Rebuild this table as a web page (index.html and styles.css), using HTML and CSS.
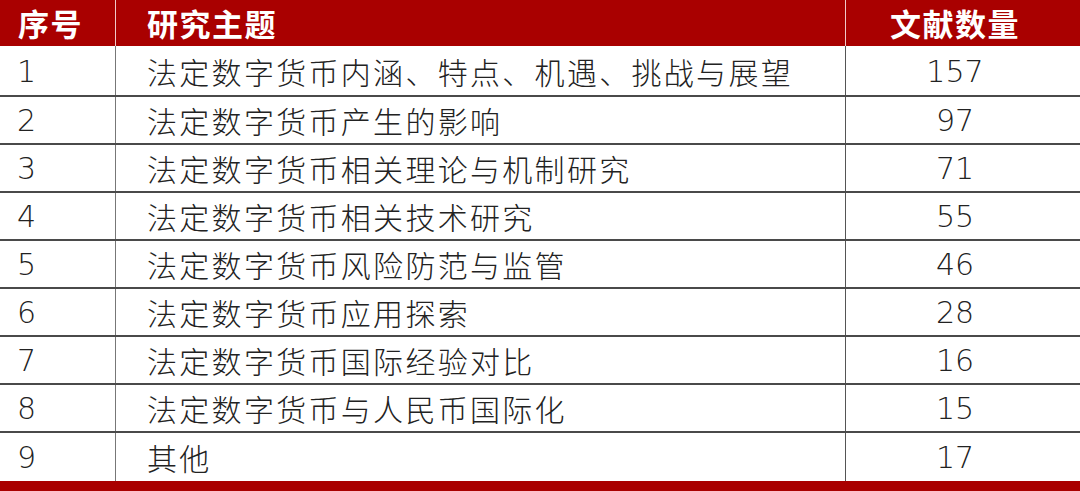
FILE: index.html
```html
<!DOCTYPE html>
<html lang="zh">
<head>
<meta charset="utf-8">
<link rel="stylesheet" href="styles.css">
</head>
<body>
<div class="table">
  <div class="row head">
    <div class="cell c1">序号</div>
    <div class="cell c2">研究主题</div>
    <div class="cell c3">文献数量</div>
  </div>
  <div class="row first">
    <div class="cell c1 num">1</div>
    <div class="cell c2">法定数字货币内涵、特点、机遇、挑战与展望</div>
    <div class="cell c3 num">157</div>
  </div>
  <div class="row">
    <div class="cell c1 num">2</div>
    <div class="cell c2">法定数字货币产生的影响</div>
    <div class="cell c3 num">97</div>
  </div>
  <div class="row">
    <div class="cell c1 num">3</div>
    <div class="cell c2">法定数字货币相关理论与机制研究</div>
    <div class="cell c3 num">71</div>
  </div>
  <div class="row">
    <div class="cell c1 num">4</div>
    <div class="cell c2">法定数字货币相关技术研究</div>
    <div class="cell c3 num">55</div>
  </div>
  <div class="row">
    <div class="cell c1 num">5</div>
    <div class="cell c2">法定数字货币风险防范与监管</div>
    <div class="cell c3 num">46</div>
  </div>
  <div class="row">
    <div class="cell c1 num">6</div>
    <div class="cell c2">法定数字货币应用探索</div>
    <div class="cell c3 num">28</div>
  </div>
  <div class="row">
    <div class="cell c1 num">7</div>
    <div class="cell c2">法定数字货币国际经验对比</div>
    <div class="cell c3 num">16</div>
  </div>
  <div class="row">
    <div class="cell c1 num">8</div>
    <div class="cell c2">法定数字货币与人民币国际化</div>
    <div class="cell c3 num">15</div>
  </div>
  <div class="row last">
    <div class="cell c1 num">9</div>
    <div class="cell c2">其他</div>
    <div class="cell c3 num">17</div>
  </div>
  <div class="footbar"></div>
</div>
</body>
</html>
```
FILE: styles.css
```css
html, body {
  margin: 0;
  padding: 0;
  background: #ffffff;
}
.table {
  width: 1080px;
  font-family: "Noto Sans CJK SC", "Noto Sans", sans-serif;
  color: #222222;
}
.row {
  display: grid;
  grid-template-columns: 116px 730px 234px;
  height: 48px;
  box-sizing: border-box;
  border-bottom: 2px solid #4a4a4a;
}
.row.first {
  height: 51px;
}
.row.last {
  border-bottom: none;
}
.cell {
  display: flex;
  align-items: center;
  font-size: 30px;
  font-weight: 300;
  line-height: 1;
  letter-spacing: 2.3px;
  white-space: nowrap;
}
.c1 {
  padding-left: 18px;
  border-right: 1px solid #777777;
}
.c2 {
  padding-left: 31px;
  border-right: 1px solid #555555;
}
.c3 {
  justify-content: center;
  padding-right: 16px;
}
.num {
  font-family: "DejaVu Sans", "Roboto", sans-serif;
  font-stretch: condensed;
  font-weight: 200;
  font-size: 30px;
  letter-spacing: 0;
  padding-top: 2px;
}
.c1.num {
  padding-left: 17px;
}
.row.head {
  height: 46px;
  background: #a90000;
  border-bottom: none;
  color: #ffffff;
}
.row.head .cell {
  font-weight: 700;
  font-size: 31px;
  letter-spacing: 1.5px;
  padding-bottom: 2px;
}
.row.head .c1 {
  border-right: 1px solid #f0c8c8;
  padding-left: 18px;
}
.row.head .c2 {
  border-right: 1px solid #f0c8c8;
  padding-left: 31px;
}
.row.head .c3 {
  padding-right: 16px;
}
.footbar {
  height: 10px;
  background: #a90000;
}
```
